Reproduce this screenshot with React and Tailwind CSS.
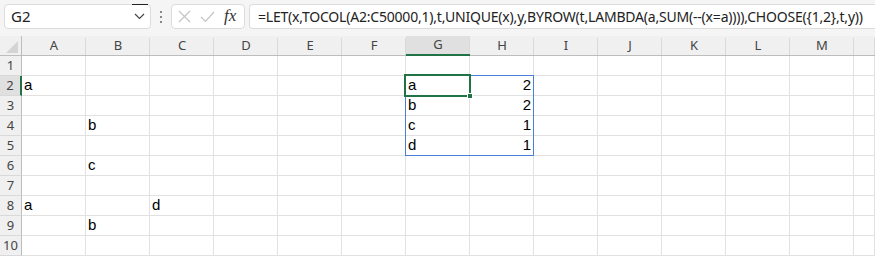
import React from "react";

const COLS = ["A","B","C","D","E","F","G","H","I","J","K","L","M",""];
const data = {
  "2-A": "a",
  "4-B": "b",
  "6-B": "c",
  "8-A": "a",
  "8-C": "d",
  "9-B": "b",
  "2-G": "a", "2-H": "2",
  "3-G": "b", "3-H": "2",
  "4-G": "c", "4-H": "1",
  "5-G": "d", "5-H": "1",
};

export default function App() {
  const rows = [1,2,3,4,5,6,7,8,9,10];
  return (
    <div className="w-[875px] h-[256px] overflow-hidden bg-white relative" style={{fontFamily: '"Noto Sans", "Open Sans", sans-serif'}}>
      {/* toolbar */}
      <div className="h-[36px] bg-[#f5f5f5] flex items-start pt-[4px] pl-[4px]">
        <div className="relative w-[147px] h-[25px] bg-white border border-[#dcdcdc] rounded-[4px] flex items-center pl-[6px] text-[15px] text-[#222]">
          G2
          <div className="absolute right-[2px] top-[-1px] w-[16px] h-[1px] bg-[#222]"></div>
          <svg className="absolute right-[5px] top-[8px]" width="11" height="7" viewBox="0 0 11 7"><path d="M1 1 L5.5 5.5 L10 1" fill="none" stroke="#444" strokeWidth="1.2"/></svg>
        </div>
        <div className="w-[20px] h-[25px] flex flex-col items-center justify-center gap-[3px]">
          <div className="w-[2px] h-[2px] bg-[#888]"></div>
          <div className="w-[2px] h-[2px] bg-[#888]"></div>
          <div className="w-[2px] h-[2px] bg-[#888]"></div>
        </div>
        <div className="w-[74px] h-[25px] bg-white border border-[#dcdcdc] rounded-[4px] flex items-center pl-[6px] gap-[9px]">
          <svg width="13" height="13" viewBox="0 0 13 13"><path d="M1 1 L12 12 M12 1 L1 12" stroke="#c4c4c4" strokeWidth="1.2" fill="none"/></svg>
          <svg width="15" height="12" viewBox="0 0 15 12"><path d="M1 6 L5.5 10.5 L14 1" stroke="#c4c4c4" strokeWidth="1.2" fill="none"/></svg>
          <span className="text-[17px] italic text-[#333] leading-none -mt-[3px]" style={{fontFamily: '"Liberation Serif", "DejaVu Serif", serif'}}>fx</span>
        </div>
        <div className="ml-[4px] flex-1 h-[25px] bg-white border border-[#dcdcdc] border-r-0 rounded-l-[4px] flex items-center pl-[8px] text-[14px] text-[#222] whitespace-nowrap tracking-[-0.2px]">
          =LET(x,TOCOL(A2:C50000,1),t,UNIQUE(x),y,BYROW(t,LAMBDA(a,SUM(--(x=a)))),CHOOSE({"{"}1,2{"}"},t,y))
        </div>
      </div>
      {/* grid */}
      <div className="grid grid-cols-[22px_repeat(13,64px)_1fr]">
        {/* header row */}
        <div className="h-[20px] bg-[#f0f0f0] border-b border-r border-[#bdbdbd] relative">
          <svg className="absolute left-[6px] top-[5px]" width="12" height="12" viewBox="0 0 12 12"><path d="M12 0 L12 12 L0 12 Z" fill="#d4d4d4"/></svg>
        </div>
        {COLS.map((c, i) => (
          <div key={c + i} className={`h-[20px] flex items-center justify-center text-[13px] text-[#444] border-b ${c === "G" ? "bg-[#e0e0e0] border-b-2 border-[#217346]" : "bg-[#f0f0f0] border-[#bdbdbd]"} relative`}>
            {c}
            <div className="absolute right-0 top-[2px] bottom-0 w-[1px] bg-[#d9d9d9]"></div>
          </div>
        ))}
        {rows.map((r) => (
          <React.Fragment key={r}>
            <div className={`h-[20px] flex items-center justify-center text-[13px] text-[#444] border-b border-[#d9d9d9] ${r === 2 ? "bg-[#e0e0e0] border-r-2 border-r-[#217346]" : "bg-[#f0f0f0] border-r border-r-[#bdbdbd]"}`}>
              {r}
            </div>
            {COLS.map((c, i) => {
              const v = data[`${r}-${c}`];
              const num = v && /^\d+$/.test(v);
              return (
                <div key={c + i} className={`h-[20px] border-b border-r border-[#e1e1e1] flex items-center text-[15px] text-black px-[2px] ${num ? "justify-end" : "justify-start"}`} style={{fontFamily: '"Liberation Sans", Arial, sans-serif'}}>
                  {v}
                </div>
              );
            })}
          </React.Fragment>
        ))}
      </div>
      {/* spill range border */}
      <div className="absolute left-[405px] top-[75px] w-[129px] h-[81px] border border-[#4a7fd6] pointer-events-none"></div>
      {/* active cell */}
      <div className="absolute left-[404px] top-[74px] w-[67px] h-[23px] border-2 border-[#217346] pointer-events-none"></div>
      <div className="absolute left-[467px] top-[93px] w-[6px] h-[6px] bg-[#217346] border border-white pointer-events-none"></div>
    </div>
  );
}
